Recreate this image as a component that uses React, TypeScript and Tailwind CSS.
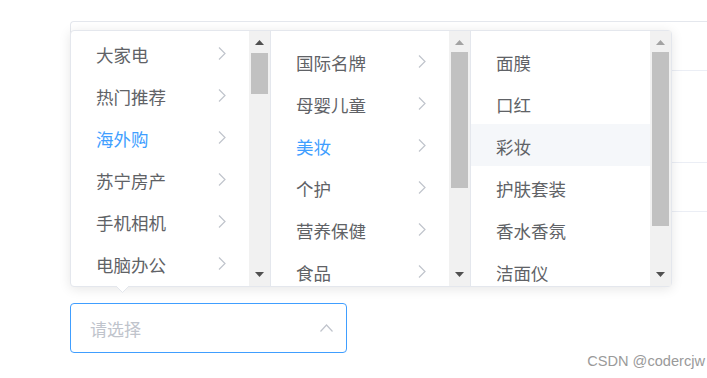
import React from 'react';

interface Column {
  items: string[];
  active?: string;
  hover?: string;
  arrows: boolean;
  listPad: string;
  thumbTop: number;
  thumbHeight: number;
  upDisabled: boolean;
  bordered: boolean;
}

const COLUMNS: Column[] = [
  {
    items: ['大家电', '热门推荐', '海外购', '苏宁房产', '手机相机', '电脑办公'],
    active: '海外购',
    arrows: true,
    listPad: 'pt-px',
    thumbTop: 22,
    thumbHeight: 41,
    upDisabled: false,
    bordered: true,
  },
  {
    items: ['国际名牌', '母婴儿童', '美妆', '个护', '营养保健', '食品'],
    active: '美妆',
    arrows: true,
    listPad: 'pt-[9px]',
    thumbTop: 21,
    thumbHeight: 136,
    upDisabled: true,
    bordered: true,
  },
  {
    items: ['面膜', '口红', '彩妆', '护肤套装', '香水香氛', '洁面仪'],
    hover: '彩妆',
    arrows: false,
    listPad: 'pt-[9px]',
    thumbTop: 21,
    thumbHeight: 174,
    upDisabled: true,
    bordered: false,
  },
];

function ChevronRight() {
  return (
    <svg width="8" height="13" viewBox="0 0 8 13" fill="none">
      <path d="M1 0.5L7 6.5L1 12.5" stroke="#c0c4cc" strokeWidth="1.2" />
    </svg>
  );
}

function Scrollbar({ col }: { col: Column }) {
  return (
    <div className="relative w-[21px] h-full bg-[#f1f1f1] shrink-0">
      <svg className="absolute left-[6px] top-[9px]" width="9" height="5" viewBox="0 0 9 5">
        <path d="M4.5 0L9 5H0Z" fill={col.upDisabled ? '#a3a3a3' : '#505050'} />
      </svg>
      <div
        className="absolute left-[2px] w-[17px] bg-[#c1c1c1]"
        style={{ top: col.thumbTop, height: col.thumbHeight }}
      />
      <svg className="absolute left-[6px] bottom-[9px]" width="9" height="5" viewBox="0 0 9 5">
        <path d="M0 0H9L4.5 5Z" fill="#505050" />
      </svg>
    </div>
  );
}

export default function App() {
  return (
    <div className="relative w-[707px] h-[378px] bg-white overflow-hidden font-['Noto_Sans_CJK_SC','Microsoft_YaHei',sans-serif]">
      {/* table behind the popper */}
      <div className="ml-[70px] mt-[21px] h-[240px] border-l border-t border-[#e4e7ed] rounded-tl-[4px]">
        <div className="h-[49px] border-b border-[#ebeef5]" />
        <div className="h-[92px] border-b border-[#ebeef5]" />
        <div className="h-[49px] border-b border-[#ebeef5]" />
      </div>

      <div className="ml-[70px] mt-[42px] w-[277px] h-[50px] border border-[#409eff] rounded-[4px] flex items-center justify-between pl-[19px] pr-[13px]">
        <span className="text-[17px] text-[#c0c4cc] pt-[2px]">请选择</span>
        <svg width="13" height="8" viewBox="0 0 13 8" fill="none">
          <path d="M0.5 7.5L6.5 1L12.5 7.5" stroke="#c0c4cc" strokeWidth="1.2" />
        </svg>
      </div>

      <div className="flex justify-end pr-[2px] text-[14.6px] leading-[16px] text-[#9a9a9a] font-['Liberation_Sans',sans-serif]">
        CSDN @codercjw
      </div>

      {/* cascader popper */}
      <div className="absolute left-[70px] top-[30px] w-[602px] h-[257px] bg-white border border-[#e4e7ed] rounded-[4px] shadow-[0_2px_12px_rgba(0,0,0,0.1)] flex">
        {COLUMNS.map((col, i) => (
          <div
            key={i}
            className={`flex h-full ${col.bordered ? 'w-[200px] border-r border-[#e4e7ed]' : 'w-[200px]'}`}
          >
            <div className={`flex-1 overflow-hidden ${col.listPad}`}>
              {col.items.map((item) => (
                <div
                  key={item}
                  className={`flex items-center justify-between h-[42px] pl-[25px] pr-[23px] text-[17.5px] ${
                    item === col.active ? 'text-[#409eff]' : 'text-[#606266]'
                  } ${item === col.hover ? 'bg-[#f5f7fa]' : ''}`}
                >
                  <span className="pt-[4px]">{item}</span>
                  {col.arrows && <ChevronRight />}
                </div>
              ))}
            </div>
            <Scrollbar col={col} />
          </div>
        ))}
      </div>
      <svg className="absolute left-[116px] top-[286px]" width="13" height="7" viewBox="0 0 13 7">
        <path d="M0 0L6.5 6.5L13 0Z" fill="white" />
        <path d="M0 0L6.5 6.5L13 0" fill="none" stroke="#e4e7ed" strokeWidth="1" />
      </svg>
    </div>
  );
}
